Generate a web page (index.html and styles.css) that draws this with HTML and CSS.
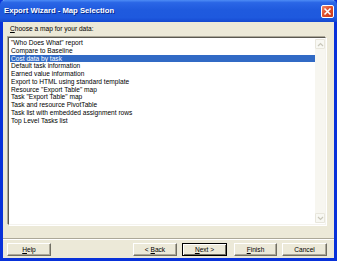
FILE: index.html
```html
<!DOCTYPE html>
<html lang="en">

<head>
    <meta charset="UTF-8">
    <title>Export Wizard - Map Selection</title>
    <link rel="stylesheet" href="styles.css">
</head>

<body>
    <div class="window">
        <!-- Titelbalk -->
        <div class="titlebar">
            <span class="title">Export Wizard - Map Selection</span>
            <span class="close">
                <svg width="13" height="13" viewBox="0 0 13 13">
                    <path d="M3.5 3.5 L9.5 9.5 M9.5 3.5 L3.5 9.5" stroke="#fff" stroke-width="1.6" />
                </svg>
            </span>
        </div>

        <div class="content">
            <div class="label"><u>C</u>hoose a map for your data:</div>

            <div class="listbox">
                <ul class="items">
                    <li>"Who Does What" report</li>
                    <li>Compare to Baseline</li>
                    <li class="selected">Cost data by task</li>
                    <li>Default task information</li>
                    <li>Earned value information</li>
                    <li>Export to HTML using standard template</li>
                    <li>Resource "Export Table" map</li>
                    <li>Task "Export Table" map</li>
                    <li>Task and resource PivotTable</li>
                    <li>Task list with embedded assignment rows</li>
                    <li>Top Level Tasks list</li>
                </ul>
                <div class="scrollbar">
                    <div class="arrow">
                        <svg width="7" height="5" viewBox="0 0 7 5"><path d="M1 4 L3.5 1.5 L6 4" fill="none" stroke="#c9c7ba" stroke-width="1.2" /></svg>
                    </div>
                    <div class="track"></div>
                    <div class="arrow">
                        <svg width="7" height="5" viewBox="0 0 7 5"><path d="M1 1 L3.5 3.5 L6 1" fill="none" stroke="#c9c7ba" stroke-width="1.2" /></svg>
                    </div>
                </div>
            </div>
        </div>

        <div class="separator"></div>

        <!-- Knoppen -->
        <div class="buttons">
            <button class="btn"><u>H</u>elp</button>
            <div class="nav">
                <button class="btn">&lt; <u>B</u>ack</button>
                <button class="btn default"><u>N</u>ext &gt;</button>
                <button class="btn finish"><u>F</u>inish</button>
                <button class="btn">Cancel</button>
            </div>
        </div>
    </div>
</body>

</html>
```

FILE: styles.css
```css
body {
    margin: 0;
    font-family: Tahoma, "Liberation Sans", Arial, sans-serif;
    font-size: 6.6px;
}

.window {
    width: 337px;
    height: 261px;
    box-sizing: border-box;
    display: flex;
    flex-direction: column;
    background-color: #ece9d8;
    border: 3px solid #0831d9;
    border-top: none;
}

/* Titelbalk in XP-stijl */
.titlebar {
    height: 22px;
    margin: 0 -3px;
    display: flex;
    align-items: center;
    justify-content: space-between;
    padding: 0 3px 1px 4px;
    box-sizing: border-box;
    border-radius: 5px 5px 0 0;
    background: linear-gradient(#4d8cf5 0%, #2a66e6 12%, #1f5ade 45%, #1e59de 80%, #1448d0 100%);
}

.title {
    color: #fff;
    font-weight: bold;
    font-size: 7.7px;
    text-shadow: 1px 1px 0 #0a2a8a;
}

.close {
    width: 13px;
    height: 13px;
    margin-top: 1px;
    box-sizing: border-box;
    border: 1px solid #fff;
    border-radius: 2px;
    background: linear-gradient(135deg, #f08a6a 0%, #e0502c 45%, #c8381a 100%);
    display: flex;
    align-items: center;
    justify-content: center;
}

.close svg {
    margin: -1px;
}

.content {
    padding: 0 8px 0 5px;
}

.label {
    height: 15px;
    line-height: 8px;
    padding: 3px 0 0 2px;
    box-sizing: border-box;
    color: #000;
}

u {
    text-decoration-thickness: 0.5px;
    text-underline-offset: 1px;
}

.listbox {
    height: 188px;
    box-sizing: border-box;
    display: flex;
    background-color: #fff;
    border: 1px solid;
    border-color: #5a5850 #f4f3ee #f4f3ee #5a5850;
    box-shadow: -1px -1px 0 #aca899, 1px 1px 0 #fff;
    padding: 1px 0 1px 1px;
}

.items {
    flex: 1;
    list-style-type: none;
    margin: 0;
    padding: 0;
}

.items li {
    height: 7.75px;
    line-height: 7.75px;
    padding-left: 1px;
    white-space: nowrap;
    color: #000;
}

.items li.selected {
    background-color: #316ac5;
    color: #fff;
}

.scrollbar {
    width: 10px;
    display: flex;
    flex-direction: column;
    background-color: #f7f6f0;
}

.arrow {
    height: 10px;
    box-sizing: border-box;
    border: 1px solid #e8e6dc;
    border-radius: 1px;
    background-color: #f8f8f3;
    display: flex;
    align-items: center;
    justify-content: center;
}

.track {
    flex: 1;
}

.separator {
    margin-top: 13px;
    height: 1px;
    border-top: 1px solid #aca899;
    background-color: #fff;
}

.buttons {
    margin-top: 3px;
    display: flex;
    justify-content: space-between;
    padding: 0 7px 0 4px;
}

.nav {
    display: flex;
    gap: 5px;
}

.btn {
    width: 45px;
    height: 13px;
    padding: 0;
    box-sizing: border-box;
    font-family: inherit;
    font-size: 6.6px;
    color: #000;
    background-color: #ece9d8;
    border: 1px solid;
    border-color: #fff #716f64 #716f64 #fff;
    box-shadow: inset -1px -1px 0 #aca899;
}

.btn:first-child {
    width: 44px;
}

.btn.default {
    border: 1px solid #000;
    box-shadow: inset 1px 1px 0 #fff, inset -1px -1px 0 #716f64;
}

.btn.finish {
    width: 43px;
    margin-left: 2px;
}
```
